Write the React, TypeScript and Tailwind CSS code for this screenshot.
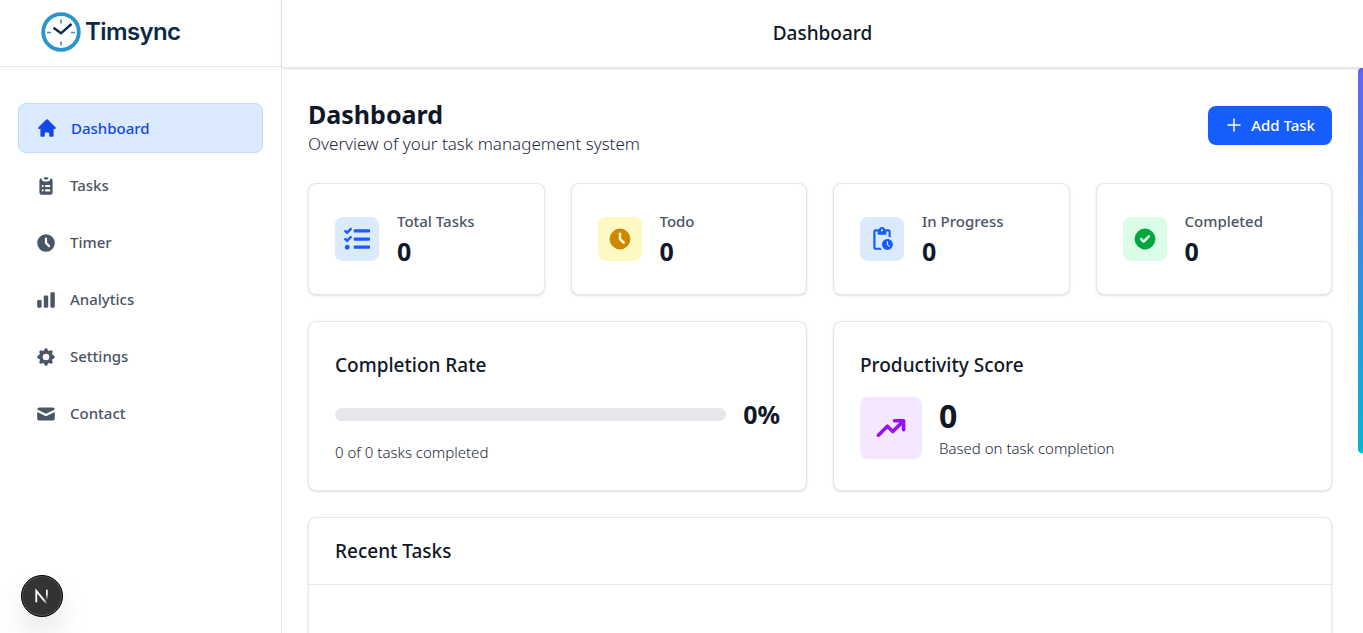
import React from "react";
import { HiHome, HiClipboardList, HiClock, HiChartBar, HiCog, HiMail, HiCheckCircle, HiTrendingUp, HiOutlinePlus } from "react-icons/hi";
import { FaTasks } from "react-icons/fa";
import { MdPendingActions } from "react-icons/md";

const nav = [
  { label: "Dashboard", Icon: HiHome, active: true },
  { label: "Tasks", Icon: HiClipboardList },
  { label: "Timer", Icon: HiClock },
  { label: "Analytics", Icon: HiChartBar },
  { label: "Settings", Icon: HiCog },
  { label: "Contact", Icon: HiMail },
];

const stats = [
  { label: "Total Tasks", Icon: FaTasks, tone: "bg-blue-100 text-blue-600" },
  { label: "Todo", Icon: HiClock, tone: "bg-yellow-100 text-yellow-600" },
  { label: "In Progress", Icon: MdPendingActions, tone: "bg-blue-100 text-blue-600" },
  { label: "Completed", Icon: HiCheckCircle, tone: "bg-green-100 text-green-600" },
];

function Logo() {
  return (
    <a href="#home" className="flex items-center gap-1">
      <svg viewBox="0 0 40 40" className="size-10" fill="none" aria-hidden="true">
        <circle cx="20" cy="20" r="17.8" stroke="#2b95cb" strokeWidth="3.8" />
        <path d="M20 7.5v4M20 29.5v4M6 20.5h4M30 20.5h4" stroke="#2b95cb" strokeWidth="1.6" />
        <path d="M12.5 15.8L20 21.3L30.5 12" stroke="#0b2a45" strokeWidth="2.4" />
      </svg>
      <span className="font-['Inter',sans-serif] text-2xl font-semibold tracking-tight text-[#0b2a45]">Timsync</span>
    </a>
  );
}

const card = "rounded-lg border border-gray-200 bg-white shadow-sm";

export default function App() {
  return (
    <div className="flex h-screen overflow-hidden bg-white font-['Noto_Sans',sans-serif] text-gray-900">
      <aside className="flex w-[282px] shrink-0 flex-col border-r border-gray-200">
        <div className="flex h-[67px] items-center border-b border-gray-200 pb-0.5 pl-[41px]">
          <Logo />
        </div>
        <nav className="flex flex-col gap-2 px-[18px] pt-9">
          {nav.map(({ label, Icon, active }) => (
            <a
              key={label}
              href={"#" + label.toLowerCase()}
              aria-current={active ? "page" : undefined}
              className={
                active
                  ? "flex h-[50px] items-center gap-[13px] rounded-lg border border-blue-200 bg-blue-100 px-[17px] text-[15px] font-medium text-blue-700"
                  : "flex h-[49px] items-center gap-[13px] rounded-lg px-[17px] text-[15px] font-medium text-gray-600"
              }
            >
              <Icon className="size-[22px]" />
              {label}
            </a>
          ))}
        </nav>
      </aside>

      <div className="flex min-w-0 flex-1 flex-col">
        <header className="z-10 flex h-[68px] shrink-0 items-center justify-center border-b border-gray-200 bg-white shadow-sm">
          <span className="text-[19px] font-medium">Dashboard</span>
        </header>

        <main className="relative flex-1 overflow-hidden px-[26px] pt-7">
          <div className="flex items-center justify-between pr-[5px]">
            <div>
              <h1 className="text-[25px] leading-9 font-bold">Dashboard</h1>
              <p className="text-[17px] leading-6 font-light text-gray-800">Overview of your task management system</p>
            </div>
            <button type="button" className="mb-0.5 flex h-[39px] items-center gap-2 rounded-lg bg-blue-600 px-[17px] text-[15px] font-medium text-white">
              <HiOutlinePlus className="size-[18px]" />
              Add Task
            </button>
          </div>

          <div className="flex flex-col gap-[26px] pt-[27px] pr-[5px]">
            <section className="grid grid-cols-4 gap-[26px]">
              {stats.map(({ label, Icon, tone }) => (
                <div key={label} className={card + " flex h-28 items-center gap-[18px] px-[26px]"}>
                  <div className={tone + " flex size-11 items-center justify-center rounded-lg"}>
                    <Icon className="size-[26px]" />
                  </div>
                  <div>
                    <p className="text-[15px] leading-6 font-medium text-gray-600">{label}</p>
                    <p className="text-[25px] leading-9 font-bold">0</p>
                  </div>
                </div>
              ))}
            </section>

            <section className="grid grid-cols-2 gap-[26px]">
              <div className={card + " h-[170px] px-[26px] pt-[27px]"}>
                <h2 className="text-[19px] leading-8 font-medium">Completion Rate</h2>
                <div className="flex items-center gap-[17px] pt-[15px]">
                  <div className="h-[13px] flex-1 rounded-full bg-gray-200" />
                  <span className="text-[25px] leading-9 font-bold">0%</span>
                </div>
                <p className="pt-2 text-[15px] leading-6 font-light text-gray-800">0 of 0 tasks completed</p>
              </div>
              <div className={card + " h-[170px] px-[26px] pt-[27px]"}>
                <h2 className="text-[19px] leading-8 font-medium">Productivity Score</h2>
                <div className="flex items-center gap-[17px] pt-[15px]">
                  <div className="flex size-[62px] items-center justify-center rounded-lg bg-purple-100 text-purple-600">
                    <HiTrendingUp className="size-9" />
                  </div>
                  <div>
                    <p className="text-[32px] leading-10 font-bold">0</p>
                    <p className="text-[15px] leading-6 font-light text-gray-800">Based on task completion</p>
                  </div>
                </div>
              </div>
            </section>

            <section className={card + " h-80"}>
              <div className="flex h-[67px] items-center border-b border-gray-200 px-[26px]">
                <h2 className="text-[19px] font-medium">Recent Tasks</h2>
              </div>
            </section>
          </div>

          <div className="absolute top-0 right-0 h-[385px] w-[5px] rounded-l bg-linear-to-b/srgb from-[#6366f1] to-[#06b6d4]" />
        </main>
      </div>

      <button
        type="button"
        aria-label="Open developer tools"
        className="fixed bottom-4 left-[21px] flex size-[42px] items-center justify-center rounded-full border border-black bg-[#333] shadow-[inset_0_0_0_1px_#555,0_16px_32px_-8px_rgba(0,0,0,0.24)]"
      >
        <svg viewBox="0 0 14 14" className="size-4" fill="none" aria-hidden="true">
          <defs>
            <linearGradient id="stem" x1="0" y1="0" x2="0" y2="1">
              <stop offset="0.4" stopColor="#fff" />
              <stop offset="1" stopColor="#fff" stopOpacity="0" />
            </linearGradient>
            <linearGradient id="diagonal" x1="0" y1="0" x2="1" y2="1">
              <stop offset="0.7" stopColor="#fff" />
              <stop offset="1" stopColor="#fff" stopOpacity="0.2" />
            </linearGradient>
          </defs>
          <path d="M2 12.5V2.5L11 13.5" stroke="url(#diagonal)" strokeWidth="1.6" />
          <rect x="10.5" y="1.5" width="1.5" height="9" fill="url(#stem)" />
        </svg>
      </button>
    </div>
  );
}
